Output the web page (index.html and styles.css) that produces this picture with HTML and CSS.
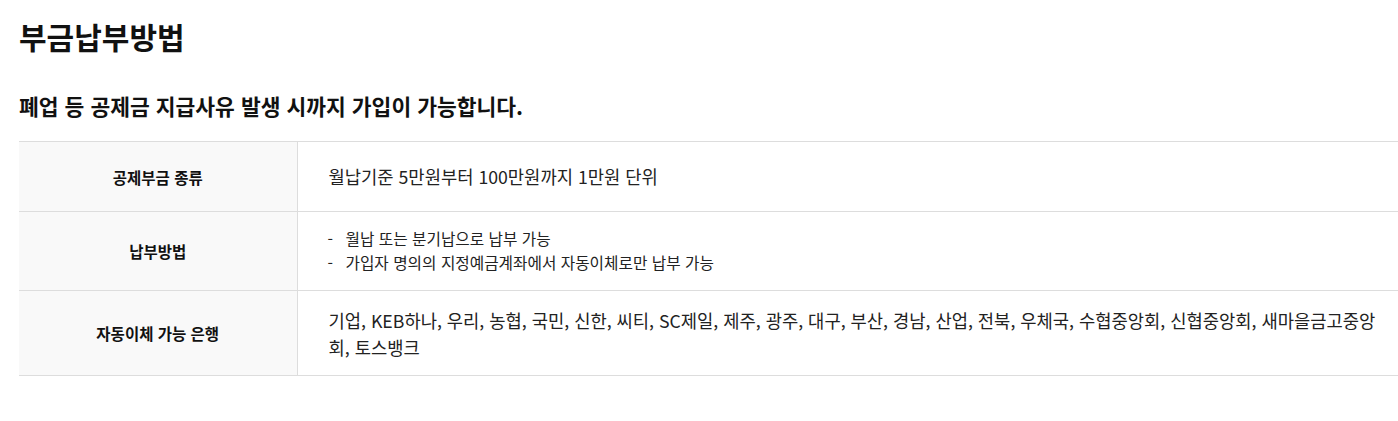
FILE: index.html
```html
<!DOCTYPE html>
<html lang="ko">
<head>
<meta charset="utf-8">
<title>부금납부방법</title>
<link rel="stylesheet" href="styles.css">
</head>
<body>
<section class="section">
  <h2 class="title">부금납부방법</h2>
  <h3 class="subtitle">폐업 등 공제금 지급사유 발생 시까지 가입이 가능합니다.</h3>
  <table class="info-table">
    <colgroup>
      <col class="col-head">
      <col>
    </colgroup>
    <tbody>
      <tr class="row-1">
        <th>공제부금 종류</th>
        <td>월납기준 5만원부터 100만원까지 1만원 단위</td>
      </tr>
      <tr class="row-2">
        <th>납부방법</th>
        <td>
          <ul class="dash-list">
            <li>월납 또는 분기납으로 납부 가능</li>
            <li>가입자 명의의 지정예금계좌에서 자동이체로만 납부 가능</li>
          </ul>
        </td>
      </tr>
      <tr class="row-3">
        <th>자동이체 가능 은행</th>
        <td>기업, KEB하나, 우리, 농협, 국민, 신한, 씨티, SC제일, 제주, 광주, 대구, 부산, 경남, 산업, 전북, 우체국, 수협중앙회, 신협중앙회, 새마을금고중앙회, 토스뱅크</td>
      </tr>
    </tbody>
  </table>
</section>
</body>
</html>
```

FILE: styles.css
```css
html, body {
  margin: 0;
  padding: 0;
  background: #fff;
}
body {
  font-family: "Noto Sans CJK KR", "Noto Sans", sans-serif;
  color: #111;
}
.section {
  padding: 14px 0 0 19px;
}
.title {
  margin: 0;
  font-size: 30px;
  font-weight: 700;
  line-height: 44px;
}
.subtitle {
  margin: 32px 0 0;
  font-size: 21.5px;
  font-weight: 700;
  line-height: 32px;
  color: #111;
}
.info-table {
  margin-top: 19px;
  width: 1379px;
  border-collapse: collapse;
  border-top: 1px solid #ddd;
  table-layout: fixed;
}
.col-head {
  width: 278px;
}
.info-table th,
.info-table td {
  border-bottom: 1px solid #ddd;
  vertical-align: middle;
}
.info-table th {
  background: #f9f9f9;
  border-right: 1px solid #ddd;
  font-size: 15.5px;
  font-weight: 700;
  color: #111;
  text-align: center;
}
.info-table td {
  padding: 0 16px 0 31px;
  font-size: 17.7px;
  line-height: 27px;
  color: #222;
}
.row-1 { height: 70px; }
.row-2 { height: 79px; }
.row-3 { height: 85px; }
.row-3 td { padding-top: 2px; }
.dash-list {
  list-style: none;
  margin: 0 0 0 -2px;
  padding: 0;
  font-size: 15.7px;
  line-height: 24px;
}
.dash-list li {
  position: relative;
  padding-left: 19px;
}
.dash-list li::before {
  content: "-";
  position: absolute;
  left: 1px;
  top: 0;
}
```
